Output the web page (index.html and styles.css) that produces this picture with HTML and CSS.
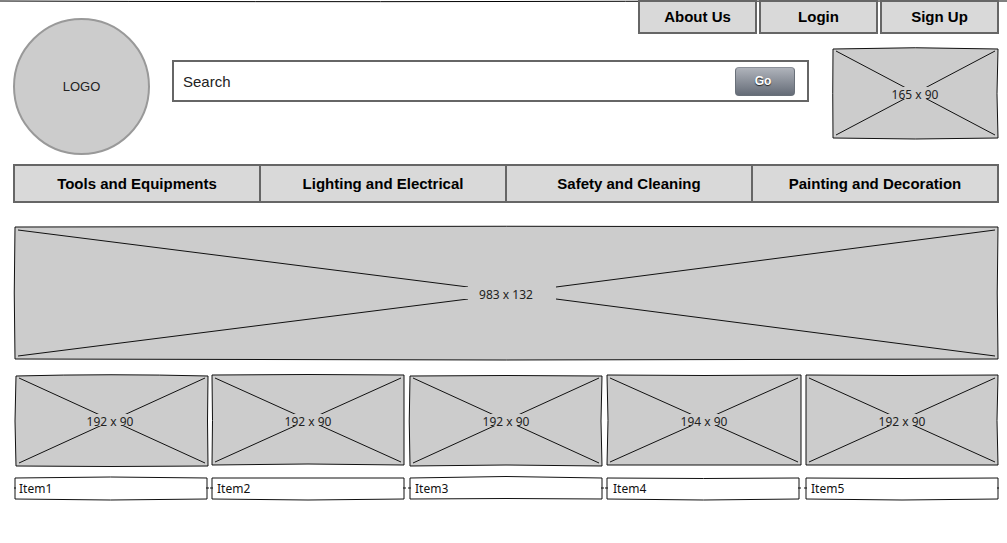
FILE: index.html
```html
<!DOCTYPE html>
<html lang="en">
<head>
<meta charset="utf-8">
<title>Hardware Store</title>
<link rel="stylesheet" href="styles.css">
</head>
<body>
<svg class="top-rule" viewBox="0 0 1007 4" preserveAspectRatio="none" aria-hidden="true"><path d="M0 1Q260 2 503 1.500T1007 1"/></svg>
<div class="page">
  <header class="header">
    <div class="logo">LOGO</div>
    <nav class="account" aria-label="Account">
      <a class="tab" href="#">About Us</a>
      <a class="tab" href="#">Login</a>
      <a class="tab" href="#">Sign Up</a>
    </nav>
    <form class="search" role="search">
      <input class="search-input" type="text" placeholder="Search" aria-label="Search">
      <button class="go" type="button">Go</button>
    </form>
    <div class="picture picture-side">
      <svg viewBox="0 0 168 94" preserveAspectRatio="none" aria-hidden="true">
        <path class="shape" d="M2 3Q84 .5 167 3Q165 48 167 92Q84 94 2 92Q1.500 48 2 3Z"/>
        <path class="cross" d="M5 5L164 89M164 5L5 89"/>
      </svg>
      <span class="size">165 x 90</span>
    </div>
  </header>

  <nav class="categories" aria-label="Categories">
    <a class="category" href="#">Tools and Equipments</a>
    <a class="category" href="#">Lighting and Electrical</a>
    <a class="category" href="#">Safety and Cleaning</a>
    <a class="category" href="#">Painting and Decoration</a>
  </nav>

  <div class="picture picture-banner">
    <svg viewBox="0 0 986 136" preserveAspectRatio="none" aria-hidden="true">
      <path class="shape" d="M2 2Q493 .5 985 2Q983.500 68 985 134Q493 136 2 134Q.5 68 2 2Z"/>
      <path class="cross" d="M5 5L455 62M543 62L982 5M5 131L455 74M543 74L982 131"/>
    </svg>
    <span class="size">983 x 132</span>
  </div>

  <main class="items">
    <section class="item">
      <div class="picture">
        <svg viewBox="0 0 194 94" preserveAspectRatio="none" aria-hidden="true">
          <path class="shape" d="M3 3Q97 .5 195 3Q194 48 195 93Q97 94 3 93Q1 48 3 3Z"/>
          <path class="cross" d="M6 5L192 90M192 5L6 90"/>
        </svg>
        <span class="size">192 x 90</span>
      </div>
      <div class="field">
        <svg viewBox="0 0 194 26" preserveAspectRatio="none" aria-hidden="true">
          <path class="box" d="M2 3Q97 1 194 3V24Q97 26 2 24Z"/><path class="cross" d="M1 13H3M193 13H196"/>
        </svg>
        <input class="field-input" type="text" value="Item1" aria-label="Item 1">
      </div>
    </section>
    <section class="item">
      <div class="picture">
        <svg viewBox="0 0 194 94" preserveAspectRatio="none" aria-hidden="true">
          <path class="shape" d="M1 2Q97 1 193 2V92Q97 90 1 92Q2 48 1 2Z"/>
          <path class="cross" d="M4 5L190 89M190 5L4 89"/>
        </svg>
        <span class="size">192 x 90</span>
      </div>
      <div class="field">
        <svg viewBox="0 0 194 26" preserveAspectRatio="none" aria-hidden="true">
          <path class="box" d="M1 3H193V24Q97 26 1 24Z"/><path class="cross" d="M-1 13H2M192 13H195"/>
        </svg>
        <input class="field-input" type="text" value="Item2" aria-label="Item 2">
      </div>
    </section>
    <section class="item">
      <div class="picture">
        <svg viewBox="0 0 194 94" preserveAspectRatio="none" aria-hidden="true">
          <path class="shape" d="M1 3Q97 2 193 3Q191 48 193 93Q97 91 1 93Q-.5 48 1 3Z"/>
          <path class="cross" d="M4 5L190 90M190 5L4 90"/>
        </svg>
        <span class="size">192 x 90</span>
      </div>
      <div class="field">
        <svg viewBox="0 0 194 26" preserveAspectRatio="none" aria-hidden="true">
          <path class="box" d="M1 3Q97 0 193 3V24Q97 23 1 24Z"/><path class="cross" d="M-1 13H2M192 13H195"/>
        </svg>
        <input class="field-input" type="text" value="Item3" aria-label="Item 3">
      </div>
    </section>
    <section class="item">
      <div class="picture">
        <svg viewBox="0 0 194 94" preserveAspectRatio="none" aria-hidden="true">
          <path class="shape" d="M0 2Q97 3 194 2V92H0Q2 48 0 2Z"/>
          <path class="cross" d="M3 5L191 89M191 5L3 89"/>
        </svg>
        <span class="size">194 x 90</span>
      </div>
      <div class="field">
        <svg viewBox="0 0 194 26" preserveAspectRatio="none" aria-hidden="true">
          <path class="box" d="M0 3Q97 4 192 3V24Q97 26 0 24Z"/><path class="cross" d="M-2 13H1M191 13H194"/>
        </svg>
        <input class="field-input" type="text" value="Item4" aria-label="Item 4">
      </div>
    </section>
    <section class="item">
      <div class="picture">
        <svg viewBox="0 0 194 94" preserveAspectRatio="none" aria-hidden="true">
          <path class="shape" d="M1 2Q97 3 193 2Q191 48 193 92H1Z"/>
          <path class="cross" d="M4 5L190 89M190 5L4 89"/>
        </svg>
        <span class="size">192 x 90</span>
      </div>
      <div class="field">
        <svg viewBox="0 0 194 26" preserveAspectRatio="none" aria-hidden="true">
          <path class="box" d="M1 3Q97 4 193 3V24Q97 26 1 24Z"/><path class="cross" d="M-1 13H2M192 13H194"/>
        </svg>
        <input class="field-input" type="text" value="Item5" aria-label="Item 5">
      </div>
    </section>
  </main>
</div>
</body>
</html>
```
FILE: styles.css
```css
* {
  box-sizing: border-box;
}

body {
  margin: 0;
  background: #fff;
  color: #000;
  font-family: "Liberation Sans", Arial, sans-serif;
  font-size: 15px;
}

.top-rule {
  position: absolute;
  top: 0;
  left: 0;
  z-index: -1;
  width: 100%;
  height: 4px;
  fill: none;
  stroke: #000;
}

.page {
  padding: 0 8px 40px 13px;
}

.header {
  display: grid;
  grid-template-rows: 34px auto;
  grid-template-columns: 137px 1fr 168px;
  column-gap: 22px;
  align-items: start;
}

.logo {
  grid-row: 1 / 3;
  display: flex;
  align-items: center;
  justify-content: center;
  height: 137px;
  margin-top: 18px;
  border: 2px solid #999;
  border-radius: 50%;
  background: #ccc;
  color: #222;
  font-size: 13px;
}

.account {
  grid-column: 2 / 4;
  display: flex;
  justify-content: flex-end;
  gap: 2px;
}

.tab,
.category {
  background: #d9d9d9;
  color: #000;
  font-weight: bold;
  line-height: 17px;
  text-align: center;
  text-decoration: none;
}

.tab {
  width: 119px;
  padding: 6px 0 7px;
  border: 2px solid #666;
}

.search {
  display: flex;
  align-items: center;
  height: 42px;
  margin-top: 26px;
  padding: 0 12px 0 9px;
  border: 2px solid #666;
  background: #fff;
}

.search-input {
  flex: 1;
  min-width: 0;
  padding: 0;
  border: 0;
  outline: 0;
  background: none;
  font: inherit;
}

.search-input::placeholder {
  color: #222;
  opacity: 1;
}

.go {
  width: 60px;
  height: 29px;
  padding: 0 4px 0 0;
  border: 1px solid #697079;
  border-top-color: #8b9099;
  border-radius: 4px;
  background: linear-gradient(#afb3bb, #656c77);
  color: #fff;
  font: bold 12px "Liberation Sans", Arial, sans-serif;
  text-shadow: 0 1px 1px #222;
}

.picture,
.field {
  display: grid;
  align-items: center;
}

.picture > *,
.field > * {
  grid-area: 1 / 1;
}

.picture svg,
.field svg {
  display: block;
  width: 100%;
  height: 94px;
  overflow: visible;
}

.picture-side {
  margin-top: 12px;
}

.picture-banner {
  margin-top: 22px;
}

.picture-banner svg {
  height: 136px;
}

.shape,
.box {
  fill: #ccc;
  stroke: #111;
  vector-effect: non-scaling-stroke;
}

.box {
  fill: #fff;
}

.cross {
  fill: none;
  stroke: #111;
  vector-effect: non-scaling-stroke;
}

.size {
  justify-self: center;
  min-width: 88px;
  height: 12px;
  background: #ccc;
  color: #222;
  font-family: "Noto Sans", sans-serif;
  font-size: 12px;
  line-height: 15px;
  text-align: center;
}

.categories {
  display: grid;
  grid-template-columns: repeat(4, 1fr);
  gap: 2px;
  margin-top: 9px;
  padding: 2px;
  background: #666;
}

.category {
  padding: 9px 0;
}

.items {
  display: grid;
  grid-template-columns: repeat(5, 1fr);
  gap: 4px;
  margin-top: 12px;
}

.item {
  display: grid;
  gap: 8px;
}

.field svg {
  height: 26px;
}

.field-input {
  width: 100%;
  padding: 0 6px;
  border: 0;
  outline: 0;
  background: none;
  color: #111;
  font-family: "Noto Sans", sans-serif;
  font-size: 12px;
  line-height: 17px;
}
```
